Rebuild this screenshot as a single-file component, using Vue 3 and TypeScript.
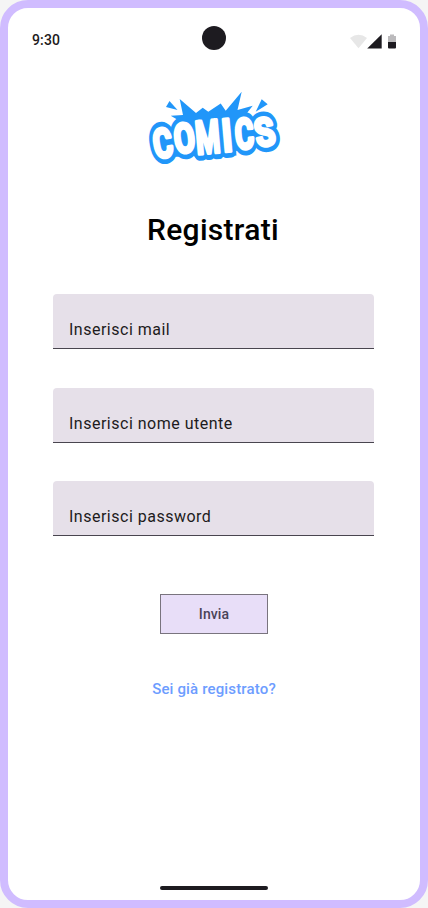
<script setup lang="ts">
import { reactive } from 'vue'

interface Field {
  key: 'mail' | 'username' | 'password'
  label: string
  type: string
}

interface LogoLetter {
  char: string
  transform: string
}

const fields: Field[] = [
  { key: 'mail', label: 'Inserisci mail', type: 'email' },
  { key: 'username', label: 'Inserisci nome utente', type: 'text' },
  { key: 'password', label: 'Inserisci password', type: 'password' },
]

const form = reactive({ mail: '', username: '', password: '' })

const letters: LogoLetter[] = [
  { char: 'C', transform: 'translate(25.2 72) rotate(-10) scale(.75 1.03)' },
  { char: 'O', transform: 'translate(46.2 67.2) rotate(-8) scale(.77 1.04)' },
  { char: 'M', transform: 'translate(69 68) rotate(-5) scale(.71 1.16)' },
  { char: 'I', transform: 'translate(88.3 66.3) rotate(-5) scale(.9 1.16)' },
  { char: 'C', transform: 'translate(105.5 63.4) rotate(-5) scale(.73 1.07)' },
  { char: 'S', transform: 'translate(127.3 60.5) rotate(-12) scale(.82 1)' },
]
</script>

<template>
  <div class="phone">
    <header class="status">
      <span class="time">9:30</span>
      <span class="camera"></span>
      <svg class="status-icons" width="48" height="16" viewBox="0 0 48 16">
        <path d="M0 4Q8.500 -2.500 17 4L8.500 14.300Z" fill="#e7e7e7" />
        <path d="M31.700 0.300V14.500H17.200Z" fill="#1d1b20" />
        <path d="M38 2h2V0.500h4V2h2v6h-8Z" fill="#bbbabc" />
        <path d="M38 8h8v5.500q0 1-1 1h-6q-1 0-1-1Z" fill="#1d1b20" />
      </svg>
    </header>

    <main class="content">
      <svg class="logo" width="148" height="85" viewBox="0 0 148 85" role="img">
        <g fill="#2196f9">
          <path d="M29.500 16 37.500 25 26 22Z" />
          <path d="M121.700 14.300 127.700 19.300 115.700 26.700Z" />
          <path d="M30.700 30.700 43 30 39.700 14 56 28 62.700 22.700 68.300 26.700 80.700 18.500 85.700 25.700 101.700 6.700 97.500 25 112.700 20.700 107 28 110 45 40 50 38 35Z" />
          <path d="M30 45 60 36 110 34 126 40 126 58 96 66 96.500 70.500 57 74.500 54 71 32 72Z" />
        </g>
        <g class="logo-outline">
          <text v-for="(l, i) in letters" :key="i" :transform="l.transform">{{ l.char }}</text>
        </g>
        <g class="logo-face">
          <text v-for="(l, i) in letters" :key="i" :transform="l.transform">{{ l.char }}</text>
        </g>
      </svg>

      <h1>Registrati</h1>

      <form class="form" @submit.prevent>
        <label v-for="f in fields" :key="f.key" class="field">
          <input v-model="form[f.key]" :type="f.type" :placeholder="f.label" />
        </label>
        <button type="submit">Invia</button>
      </form>

      <a class="login">Sei già registrato?</a>
    </main>

    <footer class="nav"><span class="handle"></span></footer>
  </div>
</template>

<style>
body {
  background: #f5f5f5;
}
</style>

<style scoped>
.phone {
  box-sizing: border-box;
  width: 428px;
  height: 908px;
  display: flex;
  flex-direction: column;
  border: 8px solid #d0bcff;
  border-radius: 28px;
  background: #fff;
  font-family: Roboto, sans-serif;
  color: #1d1b20;
}
.status {
  display: grid;
  grid-template-columns: 1fr 24px 1fr;
  align-items: center;
  height: 24px;
  padding: 18px 24px 0 24px;
}
.time {
  font-size: 14px;
  font-weight: 500;
  line-height: 20px;
  letter-spacing: 0.14px;
  padding-top: 4px;
}
.camera {
  width: 24px;
  height: 24px;
  border-radius: 50%;
  background: #1d1b20;
}
.status-icons {
  justify-self: end;
  margin: 7px -2px 0 0;
}
.content {
  flex: 1;
  display: flex;
  flex-direction: column;
  align-items: center;
}
.logo {
  margin-top: 35px;
  align-self: flex-start;
  margin-left: 132px;
}
.logo text {
  font-family: Roboto, sans-serif;
  font-weight: 700;
  font-size: 39px;
  text-anchor: middle;
  vector-effect: non-scaling-stroke;
  stroke-linejoin: round;
}
.logo-outline text {
  fill: #2196f9;
  stroke: #2196f9;
  stroke-width: 11.5px;
}
.logo-face text {
  fill: #fff;
  stroke: #fff;
  stroke-width: 3.2px;
}
h1 {
  margin: 40px 2px 0 0;
  font-size: 30px;
  line-height: 40px;
  font-weight: 500;
  letter-spacing: 0.3px;
  color: #000;
}
.form {
  display: flex;
  flex-direction: column;
  align-items: center;
  margin-top: 44px;
}
.field {
  box-sizing: border-box;
  width: 321px;
  height: 55px;
  margin: 0 1px 38.5px 0;
  padding: 24px 16px 0;
  border-bottom: 1px solid #49454f;
  border-radius: 4px 4px 0 0;
  background: #e6e0e9;
}
input {
  display: block;
  width: 100%;
  height: 24px;
  padding: 0;
  border: 0;
  outline: 0;
  background: none;
  font: 400 16px/24px Roboto, sans-serif;
  letter-spacing: 0.5px;
}
input::placeholder {
  color: #1d1b20;
  opacity: 1;
}
button {
  width: 108px;
  height: 40px;
  margin-top: 19px;
  border: 1px solid #79747e;
  background: #e8def8;
  color: #4a4458;
  font: 500 14px/20px Roboto, sans-serif;
  letter-spacing: 0.1px;
}
.login {
  margin-top: 45px;
  font-size: 15px;
  line-height: 20px;
  font-weight: 500;
  letter-spacing: 0.15px;
  color: #6d9dff;
}
.nav {
  display: flex;
  justify-content: center;
  padding-bottom: 10px;
}
.handle {
  width: 108px;
  height: 4px;
  border-radius: 2px;
  background: #1d1b20;
}
</style>
